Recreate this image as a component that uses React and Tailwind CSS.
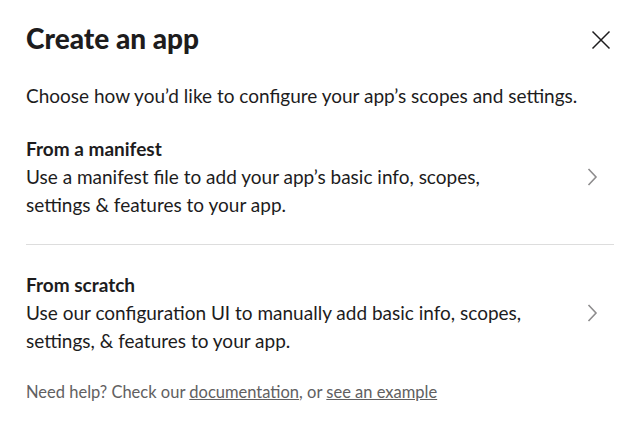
import React from 'react';

const options = [
    {
        title: 'From a manifest',
        body: 'Use a manifest file to add your app’s basic info, scopes, settings & features to your app.',
    },
    {
        title: 'From scratch',
        body: 'Use our configuration UI to manually add basic info, scopes, settings, & features to your app.',
    },
];

const Chevron = () => (
    <svg width="12" height="18" viewBox="0 0 12 18" fill="none">
        <path d="M2.5 1l7.5 8-7.5 8" stroke="#8d8c8d" strokeWidth="1.6" />
    </svg>
);

const App = () => {
    return (
        <div className="w-[640px] h-[434px] bg-white text-[#1d1c1d] font-['Lato',sans-serif] px-[26px] pt-[20px]">
            {/* header */}
            <div className="flex items-center justify-between">
                <h1 className="text-[28px] leading-[36px] font-black">Create an app</h1>
                <button className="mr-[3px] mt-[4px] text-[#1d1c1d]">
                    <svg width="20" height="20" viewBox="0 0 20 20" fill="none">
                        <path d="M1.5 1.5l17 17M18.5 1.5l-17 17" stroke="currentColor" strokeWidth="1.5" />
                    </svg>
                </button>
            </div>

            <p className="mt-[26px] text-[19px] leading-[28px]">
                Choose how you’d like to configure your app’s scopes and settings.
            </p>

            <div>
                {options.map((opt, i) => (
                    <div
                        key={opt.title}
                        className={`flex items-center py-[25px] ${i === 0 ? 'border-b border-[#dddddd]' : 'pt-[26px]'}`}
                    >
                        <div className="flex-1">
                            <div className="text-[19px] leading-[28px] font-bold">{opt.title}</div>
                            <div className="text-[19px] leading-[28px] max-w-[510px]">{opt.body}</div>
                        </div>
                        <div className="w-[28px] mr-[8px] flex justify-center">
                            <Chevron />
                        </div>
                    </div>
                ))}
            </div>

            <p className="mt-[1px] text-[16.5px] leading-[22px] text-[#616061]">
                Need help? Check our{' '}
                <a href="#" className="underline text-[#616061]">documentation</a>, or{' '}
                <a href="#" className="underline text-[#616061]">see an example</a>
            </p>
        </div>
    );
};

export default App;
